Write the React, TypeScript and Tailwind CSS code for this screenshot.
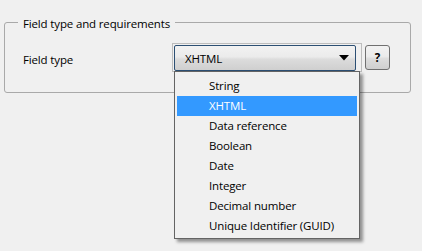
import React from "react";

const items = [
  "String",
  "XHTML",
  "Data reference",
  "Boolean",
  "Date",
  "Integer",
  "Decimal number",
  "Unique Identifier (GUID)",
];

export default function App() {
  return (
    <div
      className="relative w-[422px] h-[251px] bg-[#f0f0f0] text-[12px] text-[#000] overflow-hidden tracking-[-0.15px]"
      style={{ fontFamily: '"Open Sans", "Noto Sans", sans-serif' }}
    >
      <div className="pt-[22px] pl-[4px]">
        <div className="relative w-[407px] h-[71px] rounded-[3px] border border-[#a9a9a9]">
          <span className="absolute left-[13px] top-[-8px] px-[5px] bg-[#f0f0f0] leading-[18px] text-[11.5px]">
            Field type and requirements
          </span>
          <div className="flex items-start pt-[20px] pl-[18px]">
            <span className="w-[149px] text-[11.5px] leading-[16px] mt-[9px]">Field type</span>
            <div className="w-[190px] h-[29px] border border-[#bdbdbd] p-px">
              <div className="flex items-center w-[182px] h-[26px] border border-[#2c4f73] rounded-[2px] bg-[linear-gradient(#f2f2f2_0%,#ebebeb_45%,#dcdcdc_55%,#cfcfcf_100%)] pl-[10px] pr-[6px]">
                <span className="flex-1 text-[11.5px] leading-[16px] pt-[1px]">XHTML</span>
                <svg width="10" height="6" viewBox="0 0 10 6">
                  <polygon points="0,0 10,0 5,5.5" fill="#000" />
                </svg>
              </div>
            </div>
            <div className="ml-[3px] mt-[2px] flex items-center justify-center w-[25px] h-[25px] border border-[#707070] rounded-[3px] bg-[linear-gradient(#f2f2f2_0%,#ebebeb_45%,#dddddd_55%,#cfcfcf_100%)] font-bold text-[11.5px] leading-[14px]">
              ?
            </div>
          </div>
        </div>
      </div>

      <div className="absolute left-[174px] top-[71px] w-[186px] h-[168px] border border-[#646464] bg-[#f0f0f0] pt-[4px] px-[2px] shadow-[3px_3px_3px_rgba(0,0,0,0.4)]">
        {items.map((it) => (
          <div
            key={it}
            className={
              it === "XHTML"
                ? "h-[20px] flex items-center pl-[32px] bg-[#3399ff] text-white text-[11.5px]"
                : "h-[20px] flex items-center pl-[32px] text-[11.5px]"
            }
          >
            {it}
          </div>
        ))}
      </div>
    </div>
  );
}
